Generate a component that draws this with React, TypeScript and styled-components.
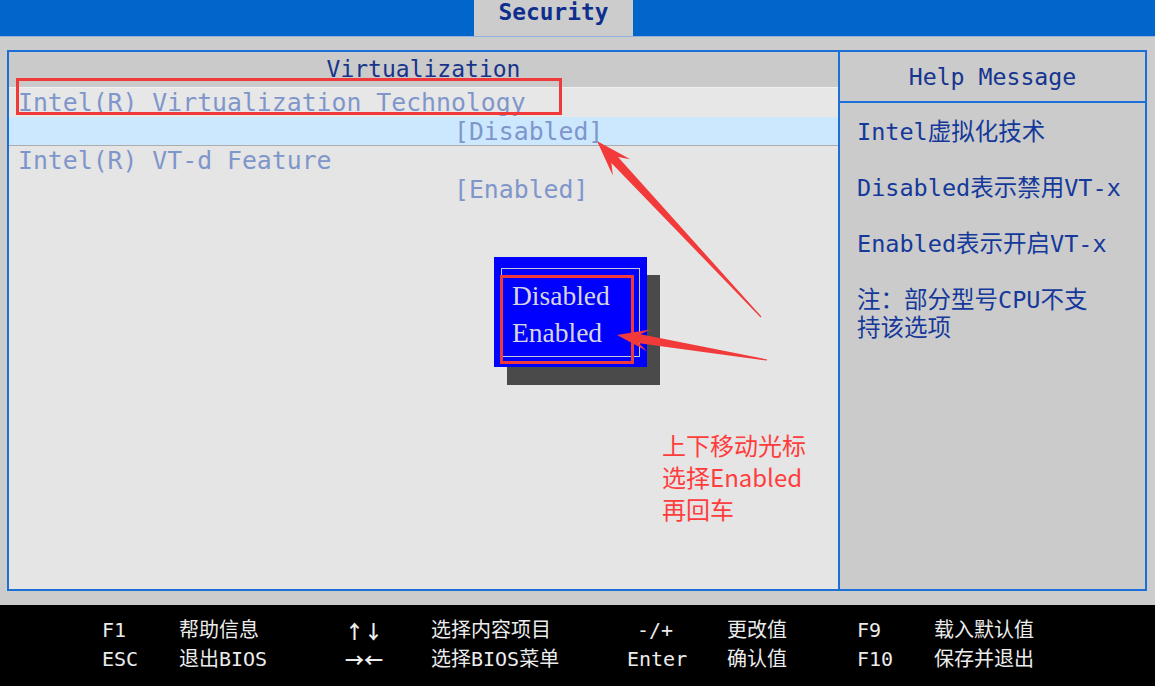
import React from "react";
import styled, { createGlobalStyle } from "styled-components";

const MONO = `"DejaVu Sans Mono", "Noto Sans CJK SC", monospace`;
const CJK = `"Noto Sans CJK SC", "Noto Sans", sans-serif`;
const FRAME = "#1c6fd6";

const GlobalStyle = createGlobalStyle`
  html, body {
    margin: 0;
    padding: 0;
    background: #ffffff;
  }
  body {
    font-family: ${MONO};
  }
`;

type Pt = [number, number];

// snipping-tool style arrow: thin tail that widens into a notched head
const arrowPoints = (tail: Pt, tip: Pt, headLen = 32, headHalf = 11, neckHalf = 4) => {
  const dx = tip[0] - tail[0];
  const dy = tip[1] - tail[1];
  const len = Math.hypot(dx, dy);
  const ux = dx / len;
  const uy = dy / len;
  const nx = -uy;
  const ny = ux;
  const neck: Pt = [tip[0] - ux * headLen * 0.72, tip[1] - uy * headLen * 0.72];
  const base: Pt = [tip[0] - ux * headLen, tip[1] - uy * headLen];
  const pts: Pt[] = [
    [tail[0] + nx * 0.6, tail[1] + ny * 0.6],
    [neck[0] + nx * neckHalf, neck[1] + ny * neckHalf],
    [base[0] + nx * headHalf, base[1] + ny * headHalf],
    tip,
    [base[0] - nx * headHalf, base[1] - ny * headHalf],
    [neck[0] - nx * neckHalf, neck[1] - ny * neckHalf],
    [tail[0] - nx * 0.6, tail[1] - ny * 0.6],
  ];
  return pts.map((p) => `${p[0].toFixed(1)},${p[1].toFixed(1)}`).join(" ");
};

const footerKeys = [
  ["F1", "帮助信息", "↑↓", "选择内容项目", "-/+", "更改值", "F9", "载入默认值"],
  ["ESC", "退出BIOS", "→←", "选择BIOS菜单", "Enter", "确认值", "F10", "保存并退出"],
];

const isArrow = (s: string) => /[↑↓→←]/.test(s);

const App = () => {
  return (
    <>
      <GlobalStyle />
      <Screen>
        <TopBar>
          <Tab>Security</Tab>
        </TopBar>

        <Body>
          <Frame>
            <LeftPanel>
              <LeftHeader>Virtualization</LeftHeader>
              <Row>Intel(R) Virtualization Technology</Row>
              <Row $selected $value>
                [Disabled]
              </Row>
              <Row $plain>Intel(R) VT-d Feature</Row>
              <Row $plain $value>
                [Enabled]
              </Row>
            </LeftPanel>

            <RightPanel>
              <HelpHeader>Help Message</HelpHeader>
              <HelpBody>
                <HelpLine>Intel虚拟化技术</HelpLine>
                <HelpLine>Disabled表示禁用VT-x</HelpLine>
                <HelpLine>Enabled表示开启VT-x</HelpLine>
                <HelpLine $wrap>注：部分型号CPU不支持该选项</HelpLine>
              </HelpBody>
            </RightPanel>
          </Frame>
        </Body>

        <Footer>
          {footerKeys.map((row, r) =>
            row.map((item, i) => (
              <KeyCell key={`${r}-${i}`} $indent={item === "-/+" ? 10 : 0} $arrow={isArrow(item)}>
                {item}
              </KeyCell>
            ))
          )}
        </Footer>
        <BottomEdge />

        {/* option popup */}
        <Popup>
          <PopupInner>
            <PopupOption>Disabled</PopupOption>
            <PopupOption>Enabled</PopupOption>
          </PopupInner>
        </Popup>

        {/* red annotations drawn over the screenshot */}
        <Mark $x={16} $y={78} $w={546} $h={37} />
        <Mark $x={500} $y={275} $w={134} $h={89} />
        <Arrows width="1155" height="691" viewBox="0 0 1155 691">
          <polygon points={arrowPoints([761, 317], [597, 141], 36, 12, 4.5)} fill="#f23a3a" />
          <polygon points={arrowPoints([767, 360], [617, 335], 32, 11, 4.5)} fill="#f23a3a" />
        </Arrows>
        <Note>
          上下移动光标
          <br />
          选择Enabled
          <br />
          再回车
        </Note>
      </Screen>
    </>
  );
};

export default App;

const Screen = styled.div`
  position: relative;
  width: 1155px;
  height: 691px;
  display: flex;
  flex-direction: column;
  overflow: hidden;
`;

const TopBar = styled.div`
  height: 36px;
  flex: none;
  display: flex;
  padding-left: 474px;
  background: #0066cc;
  border-bottom: 1px solid #93b2da;
`;

const Tab = styled.div`
  width: 159px;
  background: #cccccc;
  text-align: center;
  font-family: ${MONO};
  font-weight: bold;
  font-size: 22.8px;
  line-height: 25px;
  color: #0f2f8c;
`;

const Body = styled.div`
  flex: 1;
  display: flex;
  padding: 13px 8px 14px 7px;
  background: #cccccc;
`;

const Frame = styled.div`
  flex: 1;
  display: flex;
  border: 2px solid ${FRAME};
`;

const LeftPanel = styled.div`
  width: 829px;
  display: flex;
  flex-direction: column;
  background: #e5e5e5;
  border-right: 2px solid ${FRAME};
`;

const LeftHeader = styled.div`
  height: 35px;
  line-height: 35px;
  text-align: center;
  background: #cacaca;
  font-family: ${MONO};
  font-size: 23px;
  color: #17348a;
`;

const Row = styled.div<{ $selected?: boolean; $value?: boolean; $plain?: boolean }>`
  height: ${(p) => (p.$selected ? 28 : 29)}px;
  line-height: ${(p) => (p.$selected ? 29 : 30)}px;
  padding-left: ${(p) => (p.$value ? 445 : 9)}px;
  font-family: ${MONO};
  font-size: 24.8px;
  white-space: pre;
  color: #7f96cb;
  background: ${(p) => (p.$selected ? "#cce8ff" : p.$plain ? "transparent" : "#e7e7e7")};
  border-top: ${(p) => (!p.$selected && !p.$plain && !p.$value ? "1px solid #f0f0f0" : "none")};
  border-bottom: ${(p) => (p.$selected ? "1px solid #acacac" : "none")};
`;

const RightPanel = styled.div`
  flex: 1;
  display: flex;
  flex-direction: column;
  background: #cbcbcb;
`;

const HelpHeader = styled.div`
  height: 49px;
  line-height: 50px;
  text-align: center;
  border-bottom: 2px solid ${FRAME};
  font-family: ${MONO};
  font-size: 23.2px;
  color: #15358f;
`;

const HelpBody = styled.div`
  display: flex;
  flex-direction: column;
  gap: 28px;
  padding: 15px 0 0 17px;
`;

const HelpLine = styled.div<{ $wrap?: boolean }>`
  width: 244px;
  white-space: ${(p) => (p.$wrap ? "normal" : "nowrap")};
  font-family: ${MONO};
  font-size: 23.5px;
  line-height: 28px;
  color: #15399a;
`;

const Footer = styled.div`
  height: 81px;
  flex: none;
  box-sizing: border-box;
  display: grid;
  grid-template-columns: 77px 166px 86px 196px 100px 130px 77px 1fr;
  grid-auto-rows: 29px;
  align-content: start;
  padding: 11px 0 0 102px;
  background: #000000;
`;

const KeyCell = styled.div<{ $indent: number; $arrow: boolean }>`
  padding-left: ${(p) => p.$indent}px;
  font-family: ${(p) => (p.$arrow ? CJK : MONO)};
  font-size: ${(p) => (p.$arrow ? "19px" : "20px")};
  font-weight: ${(p) => (p.$arrow ? "bold" : "normal")};
  line-height: 29px;
  color: #ececec;
  white-space: nowrap;
`;

const BottomEdge = styled.div`
  height: 5px;
  flex: none;
  background: #ffffff;
`;

const Popup = styled.div`
  position: absolute;
  left: 494px;
  top: 257px;
  width: 153px;
  height: 110px;
  box-sizing: border-box;
  padding: 11px 7px 10px 7px;
  background: #0000ff;
  box-shadow: 13px 18px 0 #4a4a4a;
`;

const PopupInner = styled.div`
  height: 100%;
  box-sizing: border-box;
  padding: 8px 0 0 10px;
  border: 1px solid #c9c9d6;
`;

const PopupOption = styled.div`
  font-family: "Liberation Serif", "DejaVu Serif", serif;
  font-size: 27.5px;
  line-height: 37px;
  color: #d6d6e0;
`;

const Mark = styled.div<{ $x: number; $y: number; $w: number; $h: number }>`
  position: absolute;
  left: ${(p) => p.$x}px;
  top: ${(p) => p.$y}px;
  width: ${(p) => p.$w}px;
  height: ${(p) => p.$h}px;
  box-sizing: border-box;
  border: 3px solid #f0393a;
  pointer-events: none;
`;

const Arrows = styled.svg`
  position: absolute;
  left: 0;
  top: 0;
  pointer-events: none;
`;

const Note = styled.div`
  position: absolute;
  left: 662px;
  top: 429px;
  font-family: ${CJK};
  font-size: 24px;
  line-height: 32px;
  color: #ff3d3d;
`;
